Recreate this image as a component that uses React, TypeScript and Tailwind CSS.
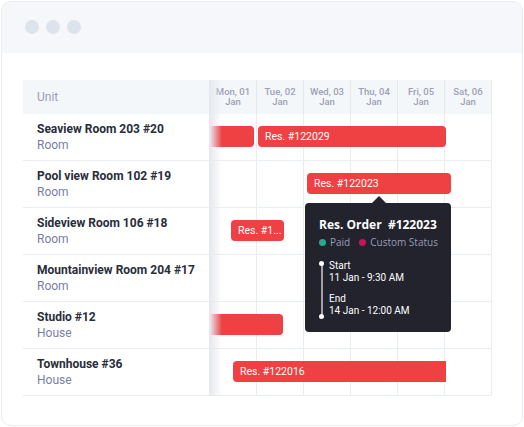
import React from "react";

const days = [
  ["Mon, 01", "Jan"],
  ["Tue, 02", "Jan"],
  ["Wed, 03", "Jan"],
  ["Thu, 04", "Jan"],
  ["Fri, 05", "Jan"],
  ["Sat, 06", "Jan"],
];

type Bar = { left: number; width: number; label?: string; round?: string };

const units: { name: string; type: string; bars: Bar[] }[] = [
  {
    name: "Seaview Room 203 #20",
    type: "Room",
    bars: [
      { left: 0, width: 44, round: "rounded-r-[4px]" },
      { left: 48, width: 188, label: "Res. #122029" },
    ],
  },
  { name: "Pool view Room 102 #19", type: "Room", bars: [{ left: 97, width: 144, label: "Res. #122023" }] },
  { name: "Sideview Room 106 #18", type: "Room", bars: [{ left: 21, width: 53, label: "Res. #1..." }] },
  { name: "Mountainview Room 204 #17", type: "Room", bars: [] },
  { name: "Studio #12", type: "House", bars: [{ left: 0, width: 73, round: "rounded-r-[4px]" }] },
  { name: "Townhouse #36", type: "House", bars: [{ left: 23, width: 213, label: "Res. #122016", round: "rounded-l-[4px]" }] },
];

function Columns() {
  return (
    <div className="absolute inset-0 grid grid-cols-6">
      {days.map((d, i) => (
        <div key={i} className="border-r border-[#e8edf3]" />
      ))}
    </div>
  );
}

export default function App() {
  return (
    <div className="w-[524px] h-[427px] bg-white p-px" style={{ fontFamily: "Roboto, 'Liberation Sans', sans-serif" }}>
      <div className="w-[522px] h-[425px] rounded-[10px] border border-[#e9ecf1] overflow-hidden bg-white">
        {/* window bar */}
        <div className="h-[51px] bg-[#f5f7fb] flex items-center gap-[7px] pl-[23px] pb-[1px]">
          <span className="w-[14px] h-[14px] rounded-full bg-[#dde3eb]" />
          <span className="w-[14px] h-[14px] rounded-full bg-[#dde3eb]" />
          <span className="w-[14px] h-[14px] rounded-full bg-[#dde3eb]" />
        </div>

        <div className="pl-[21px] pt-[27px]">
          <div className="relative w-[469px]">
            {/* header */}
            <div className="grid grid-cols-[186px_283px] h-[34px] bg-[#f4f7fa]">
              <div className="flex items-center pl-[14px] text-[12px] text-[#9a9cb8]">Unit</div>
              <div className="grid grid-cols-6 border-l border-[#e3e8ef]">
                {days.map(([a, b]) => (
                  <div key={a} className="flex flex-col items-center justify-center pb-[1px] border-r border-[#e3e8ef] text-[9.5px] leading-[10px] font-medium text-[#9da0b6]">
                    <span>{a}</span>
                    <span>{b}</span>
                  </div>
                ))}
              </div>
            </div>

            {/* rows */}
            {units.map((u) => (
              <div key={u.name} className="grid grid-cols-[186px_283px] h-[47px] border-b border-[#e9eef4]">
                <div className="flex flex-col pl-[14px] pt-[7px] text-[12px] leading-[16px]">
                  <span className="font-bold text-[#2a2d3a]">{u.name}</span>
                  <span className="text-[#7b7ea3]">{u.type}</span>
                </div>
                <div className="relative border-l border-[#e3e8ef]">
                  <Columns />
                  {u.bars.map((b, i) => (
                    <div
                      key={i}
                      className={`absolute top-[12px] h-[21px] bg-[#ef4043] text-white text-[10.5px] leading-[21px] pl-[7px] whitespace-nowrap overflow-hidden ${b.round ?? "rounded-[4px]"}`}
                      style={{ left: b.left, width: b.width }}
                    >
                      {b.label}
                    </div>
                  ))}
                </div>
              </div>
            ))}

            {/* left column shadow */}
            <div className="absolute left-[187px] top-0 bottom-0 w-[12px] bg-gradient-to-r from-[#e6e9ee] to-transparent pointer-events-none" />

            {/* tooltip */}
            <div className="absolute left-[282px] top-[123px] w-[146px] h-[129px] rounded-[4px] bg-[#22232d] text-white px-[14px] pt-[13px]">
              <div className="absolute -top-[7px] left-[67px] w-0 h-0 border-l-[7px] border-r-[7px] border-b-[7px] border-l-transparent border-r-transparent border-b-[#22232d]" />
              <div className="text-[12px] font-bold leading-[18px] whitespace-nowrap" style={{ fontFamily: "'Open Sans', sans-serif" }}>
                Res. Order&nbsp; #122023
              </div>
              <div className="flex items-center gap-[4px] text-[10px] leading-[16px] text-[#9a9cb8] whitespace-nowrap" style={{ fontFamily: "'Open Sans', sans-serif" }}>
                <span className="shrink-0 w-[7px] h-[7px] rounded-full bg-[#2aa889]" />
                <span className="mr-[5px]">Paid</span>
                <span className="shrink-0 w-[7px] h-[7px] rounded-full bg-[#c2185b]" />
                <span>Custom Status</span>
              </div>
              <div className="flex mt-[11px] gap-[5px]">
                <div className="relative shrink-0 w-[5px] h-[58px] flex flex-col items-center justify-between">
                  <div className="absolute top-[2px] bottom-[2px] w-[2px] bg-[#a3a3a8]" />
                  <span className="relative w-[5px] h-[5px] rounded-full bg-white" />
                  <span className="relative w-[5px] h-[5px] rounded-full bg-white" />
                </div>
                <div className="text-[10px] leading-[12px] -mt-[1px] whitespace-nowrap">
                  <div>Start</div>
                  <div>11 Jan - 9:30 AM</div>
                  <div className="mt-[9px]">End</div>
                  <div>14 Jan - 12:00 AM</div>
                </div>
              </div>
            </div>
          </div>
        </div>
      </div>
    </div>
  );
}
